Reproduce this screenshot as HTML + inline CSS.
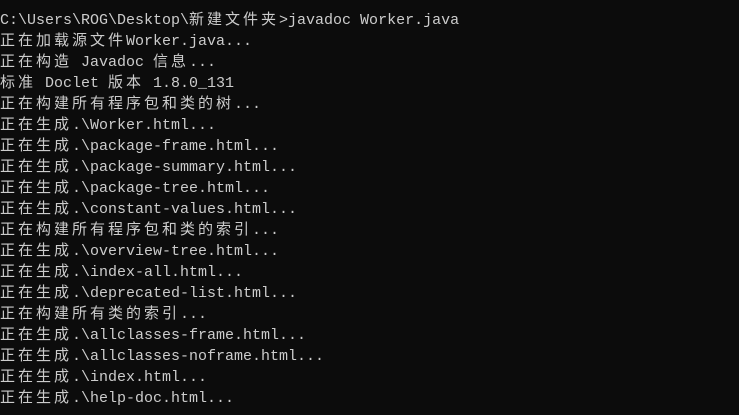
<!DOCTYPE html>
<html><head><meta charset="utf-8"><style>
html,body{margin:0;padding:0;background:#0c0c0c;width:739px;height:415px;overflow:hidden}
#t{position:absolute;left:0;top:10px;font-family:"Liberation Mono","Noto Sans CJK SC",monospace;font-size:15px;color:#cccccc}
#t div{height:21px;line-height:21px;white-space:pre;overflow:visible}
.c{letter-spacing:3px;font-family:"Noto Sans CJK SC","WenQuanYi Zen Hei",sans-serif;line-height:1}
</style></head><body>
<div id="t"><div>C:\Users\ROG\Desktop\<span class="c">新建文件夹</span>&gt;javadoc Worker.java</div><div><span class="c">正在加载源文件</span>Worker.java...</div><div><span class="c">正在构造</span> Javadoc <span class="c">信息</span>...</div><div><span class="c">标准</span> Doclet <span class="c">版本</span> 1.8.0_131</div><div><span class="c">正在构建所有程序包和类的树</span>...</div><div><span class="c">正在生成</span>.\Worker.html...</div><div><span class="c">正在生成</span>.\package-frame.html...</div><div><span class="c">正在生成</span>.\package-summary.html...</div><div><span class="c">正在生成</span>.\package-tree.html...</div><div><span class="c">正在生成</span>.\constant-values.html...</div><div><span class="c">正在构建所有程序包和类的索引</span>...</div><div><span class="c">正在生成</span>.\overview-tree.html...</div><div><span class="c">正在生成</span>.\index-all.html...</div><div><span class="c">正在生成</span>.\deprecated-list.html...</div><div><span class="c">正在构建所有类的索引</span>...</div><div><span class="c">正在生成</span>.\allclasses-frame.html...</div><div><span class="c">正在生成</span>.\allclasses-noframe.html...</div><div><span class="c">正在生成</span>.\index.html...</div><div><span class="c">正在生成</span>.\help-doc.html...</div></div>
</body></html>
